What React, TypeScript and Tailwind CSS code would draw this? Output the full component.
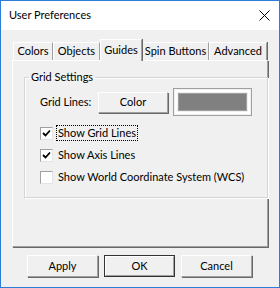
import React from 'react';

const font = { fontFamily: 'Lato, "Liberation Sans", Arial, sans-serif' };

const Raised = ({ children, className = '' }: any) => (
  <div
    className={`flex items-center justify-center bg-[#f0f0f0] border border-t-white border-l-white border-r-[#a0a0a0] border-b-[#a0a0a0] shadow-[1px_1px_0_#696969] whitespace-nowrap ${className}`}
  >
    {children}
  </div>
);

const Check = ({ checked, label, focus }: any) => (
  <div className="flex items-center h-[22px] whitespace-nowrap">
    <div className="w-[13px] h-[13px] shrink-0 bg-white border border-t-[#a0a0a0] border-l-[#a0a0a0] border-r-[#e3e3e3] border-b-[#e3e3e3] flex items-center justify-center">
      {checked && (
        <svg width="9" height="9" viewBox="0 0 9 9">
          <path d="M1 4 L3.5 6.5 L8 1.5" stroke="#000" strokeWidth="1.8" fill="none" />
        </svg>
      )}
    </div>
    <span className={`ml-[4px] px-[1px] leading-[14px] ${focus ? 'outline-1 outline-dotted outline-black' : ''}`}>
      {label}
    </span>
  </div>
);

const tabs = [
  { name: 'Colors', w: 'w-[40px]' },
  { name: 'Objects', w: 'w-[47px]' },
  { name: 'Guides', w: 'w-[42px]', active: true },
  { name: 'Spin Buttons', w: 'w-[67px]' },
  { name: 'Advanced', w: 'w-[58px]' },
];

export default function App() {
  return (
    <div style={font} className="w-[280px] h-[288px] border border-[#2b7dd8] bg-[#f0f0f0] flex flex-col text-[11px] text-black">
      {/* title bar */}
      <div className="h-[29px] bg-white flex items-center justify-between pl-[8px] pr-[8px] shrink-0">
        <span className="text-[11px]">User Preferences</span>
        <svg width="11" height="11" viewBox="0 0 11 11" className="mr-[1px]">
          <path d="M0.5 0.5 L10.5 10.5 M10.5 0.5 L0.5 10.5" stroke="#000" strokeWidth="1" />
        </svg>
      </div>

      {/* tabs */}
      <div className="flex items-end h-[30px] pl-[12px] shrink-0">
        {tabs.map((t) => (
          <div
            key={t.name}
            className={`${t.w} flex items-center justify-center whitespace-nowrap bg-[#f0f0f0] border-l border-t border-l-white border-t-white border-r border-r-[#a0a0a0] shadow-[1px_0_0_#696969] relative ${
              t.active ? 'z-10 -mb-[1px] h-[22px]' : 'h-[18px]'
            }`}
          >
            {t.name}
          </div>
        ))}
      </div>

      {/* panel */}
      <div className="mx-[11px] h-[187px] border border-t-white border-l-white border-r-[#a0a0a0] border-b-[#a0a0a0] shadow-[1px_1px_0_#696969] pl-[11px] pr-[12px] pt-[8px]">
        <fieldset className="border border-[#d5d5d5] shadow-[inset_1px_1px_0_white,1px_1px_0_white] h-[129px] px-[15px]">
          <legend className="px-[2px] -ml-[11px] leading-[16px]">Grid Settings</legend>
          <div className="flex items-center mt-[3px]">
            <span className="w-[58px] whitespace-nowrap">Grid Lines:</span>
            <Raised className="w-[70px] h-[21px]">Color</Raised>
            <div className="ml-[5px] w-[79px] h-[28px] border border-[#a0a0a0] p-[1px]">
              <div className="w-full h-full border-2 border-white p-[1px]">
                <div className="w-full h-full bg-[#808080] border border-[#a0a0a0]" />
              </div>
            </div>
          </div>
          <div className="mt-[6px] flex flex-col">
            <Check checked label="Show Grid Lines" focus />
            <Check checked label="Show Axis Lines" />
            <Check label="Show World Coordinate System (WCS)" />
          </div>
        </fieldset>
      </div>

      {/* buttons */}
      <div className="flex gap-[6px] pl-[26px] mt-[8px]">
        <Raised className="w-[71px] h-[22px]">Apply</Raised>
        <div className="w-[71px] h-[22px] border border-[#333]">
          <Raised className="w-full h-full shadow-none">OK</Raised>
        </div>
        <Raised className="w-[71px] h-[22px]">Cancel</Raised>
      </div>
    </div>
  );
}
